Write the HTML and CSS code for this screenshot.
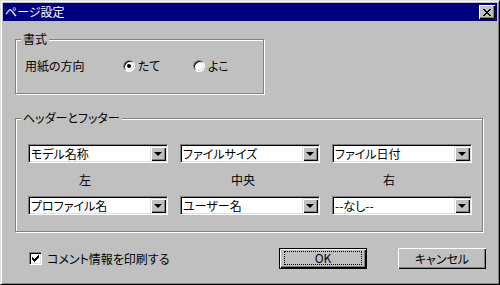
FILE: index.html
```html
<!doctype html>
<html>
<head>
<meta charset="utf-8">
<title>ページ設定</title>
<link rel="stylesheet" href="styles.css">
</head>
<body>
<div class="window">
	<div class="titlebar">
		<span class="title">ページ設定</span>
		<span class="close-btn"><svg width="8" height="7" viewBox="0 0 8 7" shape-rendering="crispEdges"><path d="M0 0h2v1h-2zM6 0h2v1h-2zM1 1h2v1h-2zM5 1h2v1h-2zM2 2h4v1h-4zM3 3h2v1h-2zM2 4h4v1h-4zM1 5h2v1h-2zM5 5h2v1h-2zM0 6h2v1h-2zM6 6h2v1h-2z" fill="#000"/></svg></span>
	</div>
	<div class="body">
		<div class="group group-format">
			<span class="group-title">書式</span>
			<span class="field-label">用紙の方向</span>
			<span class="option"><span class="radio checked"></span>たて</span>
			<span class="option"><span class="radio"></span>よこ</span>
		</div>
		<div class="group group-hf">
			<span class="group-title">ヘッダーとフッター</span>
			<div class="combo-grid">
				<div class="combo"><span class="combo-text">モデル名称</span><span class="combo-btn"><i class="arrow"></i></span></div>
				<div class="combo"><span class="combo-text">ファイルサイズ</span><span class="combo-btn"><i class="arrow"></i></span></div>
				<div class="combo"><span class="combo-text">ファイル日付</span><span class="combo-btn"><i class="arrow"></i></span></div>
				<div class="pos-label">左</div>
				<div class="pos-label">中央</div>
				<div class="pos-label">右</div>
				<div class="combo"><span class="combo-text">プロファイル名</span><span class="combo-btn"><i class="arrow"></i></span></div>
				<div class="combo"><span class="combo-text">ユーザー名</span><span class="combo-btn"><i class="arrow"></i></span></div>
				<div class="combo"><span class="combo-text">--なし--</span><span class="combo-btn"><i class="arrow"></i></span></div>
			</div>
		</div>
		<div class="footer">
			<span class="check-option"><span class="checkbox"><svg width="7" height="7" viewBox="0 0 7 7" shape-rendering="crispEdges"><path d="M6 0h1v1h-1zM5 1h2v1h-2zM0 2h1v1h-1zM4 2h3v1h-3zM0 3h2v1h-2zM3 3h3v1h-3zM0 4h5v1h-5zM1 5h3v1h-3zM2 6h1v1h-1z" fill="#000"/></svg></span>コメント情報を印刷する</span>
			<span class="btn btn-default"><span class="focus">OK</span></span>
			<span class="btn btn-cancel">キャンセル</span>
		</div>
	</div>
</div>
</body>
</html>
```

FILE: styles.css
```css
body {
	margin: 0;
	font-family: "Noto Sans CJK JP", sans-serif;
	font-size: 12px;
	line-height: 14px;
	font-feature-settings: "palt";
	color: #000;
}
.window {
	width: 500px;
	height: 285px;
	box-sizing: border-box;
	background: #c0c0c0;
	border: 1px solid;
	border-color: #dfdfdf #000 #000 #dfdfdf;
	box-shadow: inset 1px 1px 0 #fff, inset -1px -1px 0 #808080;
	padding: 2px;
}
.titlebar {
	display: flex;
	align-items: center;
	height: 18px;
	background: #000080;
	color: #fff;
	padding: 0 2px 0 2px;
}
.title {
	flex: 1;
}
.close-btn {
	display: flex;
	align-items: center;
	justify-content: center;
	width: 16px;
	height: 14px;
	box-sizing: border-box;
	background: #c0c0c0;
	box-shadow: inset 1px 1px 0 #fff, inset -1px -1px 0 #000, inset -2px -2px 0 #808080;
}
.body {
	padding: 0 0 0 12px;
}
.group {
	position: relative;
	box-sizing: border-box;
	border: 1px solid #808080;
	box-shadow: inset 1px 1px 0 #fff, 1px 1px 0 #fff;
}
.group-title {
	position: absolute;
	top: -8px;
	left: 5px;
	padding: 0 2px;
	background: #c0c0c0;
}
.group-format {
	display: flex;
	align-items: center;
	margin-top: 18px;
	width: 249px;
	height: 55px;
	padding: 0 0 2px 9px;
}
.field-label {
	width: 99px;
}
.option {
	display: flex;
	align-items: center;
	width: 71px;
}
.radio {
	position: relative;
	width: 12px;
	height: 12px;
	box-sizing: border-box;
	margin-right: 3px;
	border-radius: 50%;
	background: #fff;
	border: 1px solid;
	border-color: #808080 #fff #fff #808080;
	box-shadow: inset 1px 1px 0 #000, inset -1px -1px 0 #dfdfdf;
}
.radio.checked::after {
	content: "";
	position: absolute;
	left: 3px;
	top: 3px;
	width: 4px;
	height: 4px;
	border-radius: 50%;
	background: #000;
}
.group-hf {
	margin-top: 24px;
	width: 468px;
	height: 114px;
	padding: 25px 0 0 12px;
}
.combo-grid {
	display: grid;
	grid-template-columns: repeat(3, 140px);
	grid-template-rows: 19px 33px 19px;
	column-gap: 12px;
}
.combo {
	display: flex;
	align-items: center;
	box-sizing: border-box;
	height: 19px;
	padding: 1px;
	background: #fff;
	border: 1px solid;
	border-color: #808080 #fff #fff #808080;
	box-shadow: inset 1px 1px 0 #000, inset -1px -1px 0 #dfdfdf;
}
.combo-text {
	flex: 1;
	padding-left: 1px;
	white-space: nowrap;
}
.combo-btn {
	display: flex;
	align-items: center;
	justify-content: center;
	width: 16px;
	height: 15px;
	background: #c0c0c0;
	box-shadow: inset 1px 1px 0 #dfdfdf, inset 2px 2px 0 #fff, inset -1px -1px 0 #000, inset -2px -2px 0 #808080;
}
.arrow {
	width: 0;
	height: 0;
	border-left: 4px solid transparent;
	border-right: 4px solid transparent;
	border-top: 4px solid #000;
	margin-top: 1px;
}
.pos-label {
	align-self: center;
	padding-left: 51px;
}
.footer {
	display: flex;
	align-items: center;
	margin-top: 16px;
	padding: 0 11px 0 14px;
}
.check-option {
	display: flex;
	align-items: center;
	flex: 1;
}
.checkbox {
	display: flex;
	align-items: center;
	justify-content: center;
	width: 13px;
	height: 13px;
	box-sizing: border-box;
	margin-right: 5px;
	background: #fff;
	border: 1px solid;
	border-color: #808080 #fff #fff #808080;
	box-shadow: inset 1px 1px 0 #000, inset -1px -1px 0 #dfdfdf;
}
.btn {
	display: flex;
	align-items: center;
	justify-content: center;
	width: 88px;
	height: 21px;
	box-sizing: border-box;
	background: #c0c0c0;
	box-shadow: inset 1px 1px 0 #fff, inset -1px -1px 0 #000, inset -2px -2px 0 #808080;
}
.btn-default {
	border: 1px solid #000;
	padding: 2px 4px 3px 4px;
	align-items: stretch;
}
.focus {
	flex: 1;
	display: flex;
	align-items: center;
	justify-content: center;
	border: 1px dotted #000;
}
.btn-cancel {
	margin-left: 31px;
}
```
